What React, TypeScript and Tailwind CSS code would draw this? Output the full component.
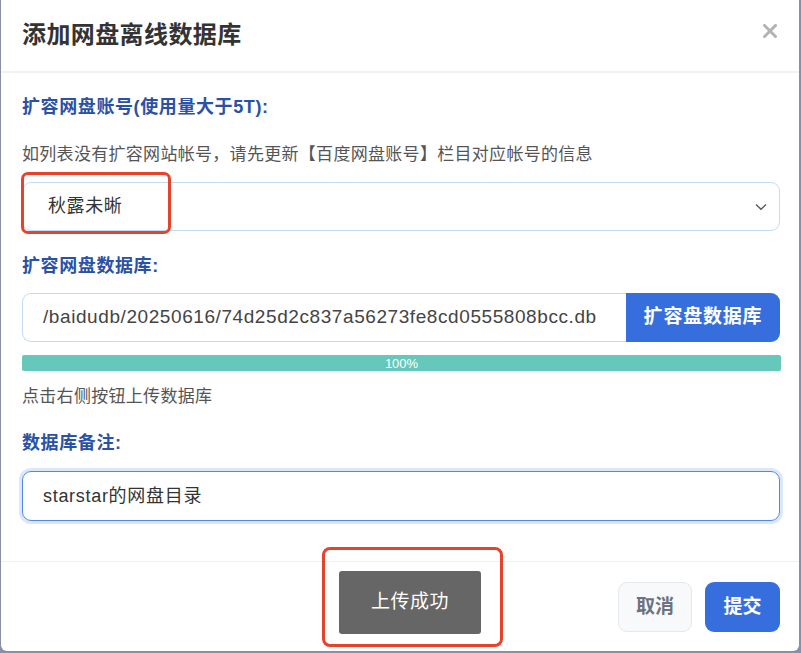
import React from "react";

const CJK = '"Liberation Sans", "Noto Sans CJK SC", sans-serif';

export default function App() {
  return (
    <div
      className="w-[801px] h-[653px] bg-[#8790a6] overflow-hidden"
      style={{ fontFamily: CJK }}
    >
      <div className="ml-[1px] w-[798px] h-[651px] bg-white rounded-b-[6px] flex flex-col">
        {/* Header */}
        <div className="h-[71px] flex items-center justify-between pl-[21px] pr-[20px] border-b-2 border-[#f1f1f1] box-content">
          <div className="text-[24px] font-bold text-[#333333] tracking-[0.4px] mt-[-2px]">
            添加网盘离线数据库
          </div>
          <svg width="14" height="14" viewBox="0 0 14 14" className="mt-[-10px] mr-[2px]">
            <path d="M1.5 1.5 L12.5 12.5 M12.5 1.5 L1.5 12.5" stroke="#b3b3b3" strokeWidth="3" strokeLinecap="square" />
          </svg>
        </div>

        {/* Body */}
        <div className="px-[21px] pt-[21px] flex flex-col">
          <div className="h-[26px] leading-[26px] text-[18px] font-bold text-[#2a51a5] tracking-[0.6px]">
            扩容网盘账号(使用量大于5T):
          </div>
          <div className="mt-[23px] h-[24px] leading-[24px] text-[17px] text-[#555555] tracking-[0.3px]">
            如列表没有扩容网站帐号，请先更新【百度网盘账号】栏目对应帐号的信息
          </div>
          <div className="relative mt-[15px] h-[49px] border border-[#c3dbf3] rounded-[9px] flex items-center justify-between pl-[25px] pr-[12px] w-[758px]">
            <span className="text-[18px] text-[#333333] tracking-[0.6px]">秋露未晰</span>
            <svg width="12" height="8" viewBox="0 0 12 8">
              <path d="M1 1.5 L6 6.3 L11 1.5" fill="none" stroke="#555" strokeWidth="1.3" />
            </svg>
            <div className="absolute left-[-2px] top-[-11px] w-[150px] h-[62px] border-[3px] border-[#e8412c] rounded-[7px]" />
          </div>

          <div className="mt-[22px] h-[26px] leading-[26px] text-[18px] font-bold text-[#2a51a5] tracking-[0.6px]">
            扩容网盘数据库:
          </div>
          <div className="mt-[14px] h-[49px] flex w-[758px]">
            <div className="flex-1 border border-[#c3dbf3] border-r-0 rounded-l-[9px] flex items-center pl-[20px]">
              <span className="text-[19px] text-[#444444] tracking-[0.58px]">
                /baidudb/20250616/74d25d2c837a56273fe8cd0555808bcc.db
              </span>
            </div>
            <div className="w-[154px] bg-[#366fdd] rounded-r-[9px] flex items-center justify-center text-white text-[19px] font-bold tracking-[0.8px]">
              扩容盘数据库
            </div>
          </div>
          <div className="mt-[13px] h-[16px] w-[759px] bg-[#66c8ba] rounded-[2px] flex items-center justify-center text-white text-[13px] leading-none">
            100%
          </div>
          <div className="mt-[14px] h-[24px] leading-[24px] text-[17px] text-[#555555] tracking-[0.3px]">
            点击右侧按钮上传数据库
          </div>

          <div className="mt-[21px] h-[26px] leading-[26px] text-[18px] font-bold text-[#2a51a5] tracking-[0.6px]">
            数据库备注:
          </div>
          <div className="mt-[15px] h-[50px] w-[758px] border border-[#4f86eb] rounded-[9px] ring-[3px] ring-[#dbe7fb] flex items-center pl-[20px]">
            <span className="text-[18px] text-[#333333] tracking-[0.7px]">starstar的网盘目录</span>
          </div>
        </div>

        {/* Footer */}
        <div className="mt-[40px] border-t border-[#efefef] flex-1 flex items-start pr-[19px]">
          <div className="relative ml-[338px] mt-[9px]">
            <div className="w-[142px] h-[63px] bg-[#666666] rounded-[3px] flex items-center justify-center text-white text-[19px] tracking-[0.5px]">
              上传成功
            </div>
            <div className="absolute left-[-17px] top-[-24px] w-[181px] h-[100px] border-[3px] border-[#e8412c] rounded-[8px]" />
          </div>
          <div className="ml-auto mt-[20px] flex gap-[13px]">
            <div className="w-[74px] h-[50px] bg-[#f8f9fb] border border-[#e6e8eb] rounded-[9px] flex items-center justify-center text-[19px] font-bold text-[#6b7280]">
              取消
            </div>
            <div className="w-[75px] h-[50px] bg-[#366fdd] rounded-[9px] flex items-center justify-center text-[19px] font-bold text-white">
              提交
            </div>
          </div>
        </div>
      </div>
    </div>
  );
}
